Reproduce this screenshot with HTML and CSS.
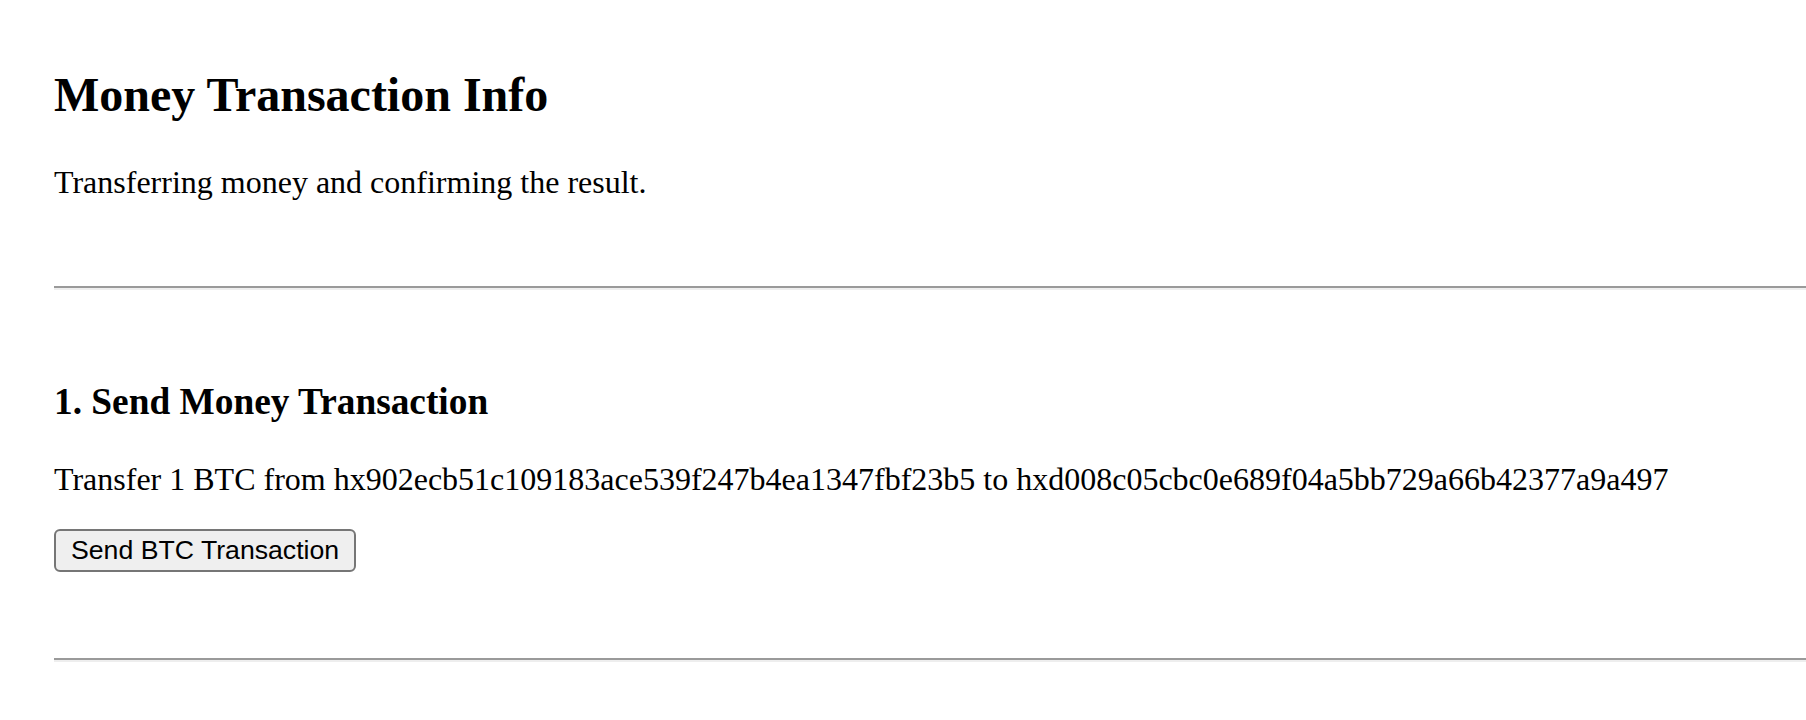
FILE: index.html
```html
<!DOCTYPE html>
<html lang="en">

<head>
    <meta charset="utf-8">
    <title>Money Transaction Info</title>
    <link rel="stylesheet" href="styles.css">
</head>

<body>
    <div class="page">
        <h1 class="title">Money Transaction Info</h1>
        <p class="intro">Transferring money and confirming the result.</p>
        <hr class="divider">

        <section class="step">
            <h3 class="step-title">1. Send Money Transaction</h3>
            <p class="step-text">Transfer 1 BTC from hx902ecb51c109183ace539f247b4ea1347fbf23b5 to hxd008c05cbc0e689f04a5bb729a66b42377a9a497</p>
            <button id="button-send" class="send-button" type="button">Send BTC Transaction</button>
        </section>
        <hr class="divider divider-bottom">
    </div>
</body>

</html>
```

FILE: styles.css
```css
body {
    margin: 0;
    font-family: "Liberation Serif", "Times New Roman", serif;
    color: #000000;
    background-color: #ffffff;
}

.page {
    padding-top: 67px;
    padding-left: 54px;
}

.title {
    font-size: 48px;
    font-weight: bold;
    margin: 0 0 42px 0;
}

.intro {
    font-size: 32px;
    margin: 0;
}

.divider {
    margin: 85px 0 0 0;
    border: none;
    border-top: 2px solid #9a9a9a;
    border-bottom: 2px solid #eeeeee;
    height: 0;
}

.step {
    padding-top: 90px;
}

.step-title {
    font-size: 37.33px;
    font-weight: bold;
    margin: 0 0 38px 0;
}

.step-text {
    font-size: 32px;
    margin: 0 0 31px 0;
}

.send-button {
    display: block;
    font-family: "Liberation Sans", Arial, sans-serif;
    font-size: 26.67px;
    padding: 4px 15px;
    color: #000000;
    background-color: #efefef;
    border: 2px solid #767676;
    border-radius: 6px;
}

.divider-bottom {
    margin-top: 86px;
}
```
